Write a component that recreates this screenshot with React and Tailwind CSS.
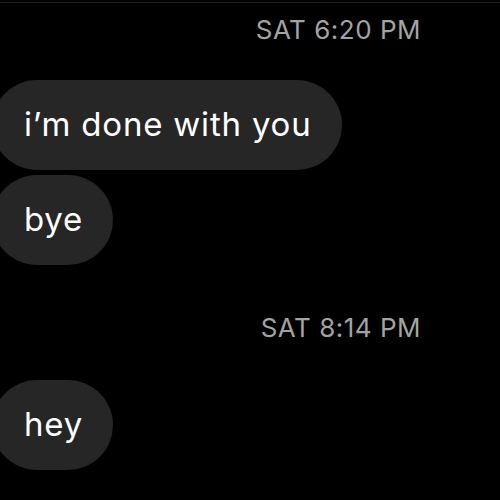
function Stamp({ children, className = '' }) {
  return (
    <div className={`flex justify-end pr-[79px] ${className}`}>
      <span className="text-[26px] leading-none text-[#a3a3a3] tracking-[0.5px]">{children}</span>
    </div>
  );
}

function Bubble({ children, className = '' }) {
  return (
    <div className={`flex ${className}`}>
      <div className="-ml-[8px] flex h-[90px] items-center rounded-full bg-[#262626] pb-[2px] pl-[32px] pr-[30px] text-[33px] leading-none tracking-[0.8px] text-white">
        {children}
      </div>
    </div>
  );
}

export default function App() {
  return (
    <div
      className="h-[500px] w-[500px] overflow-hidden bg-black"
      style={{ fontFamily: 'Inter, "Liberation Sans", sans-serif' }}
    >
      <div className="h-[3px] border-b border-[#1c1c1c]" />
      <Stamp className="mt-[14px]">SAT 6:20 PM</Stamp>
      <Bubble className="mt-[37px]">i’m done with you</Bubble>
      <Bubble className="mt-[5px]">bye</Bubble>
      <Stamp className="mt-[50px]">SAT 8:14 PM</Stamp>
      <Bubble className="mt-[39px]">hey</Bubble>
    </div>
  );
}
